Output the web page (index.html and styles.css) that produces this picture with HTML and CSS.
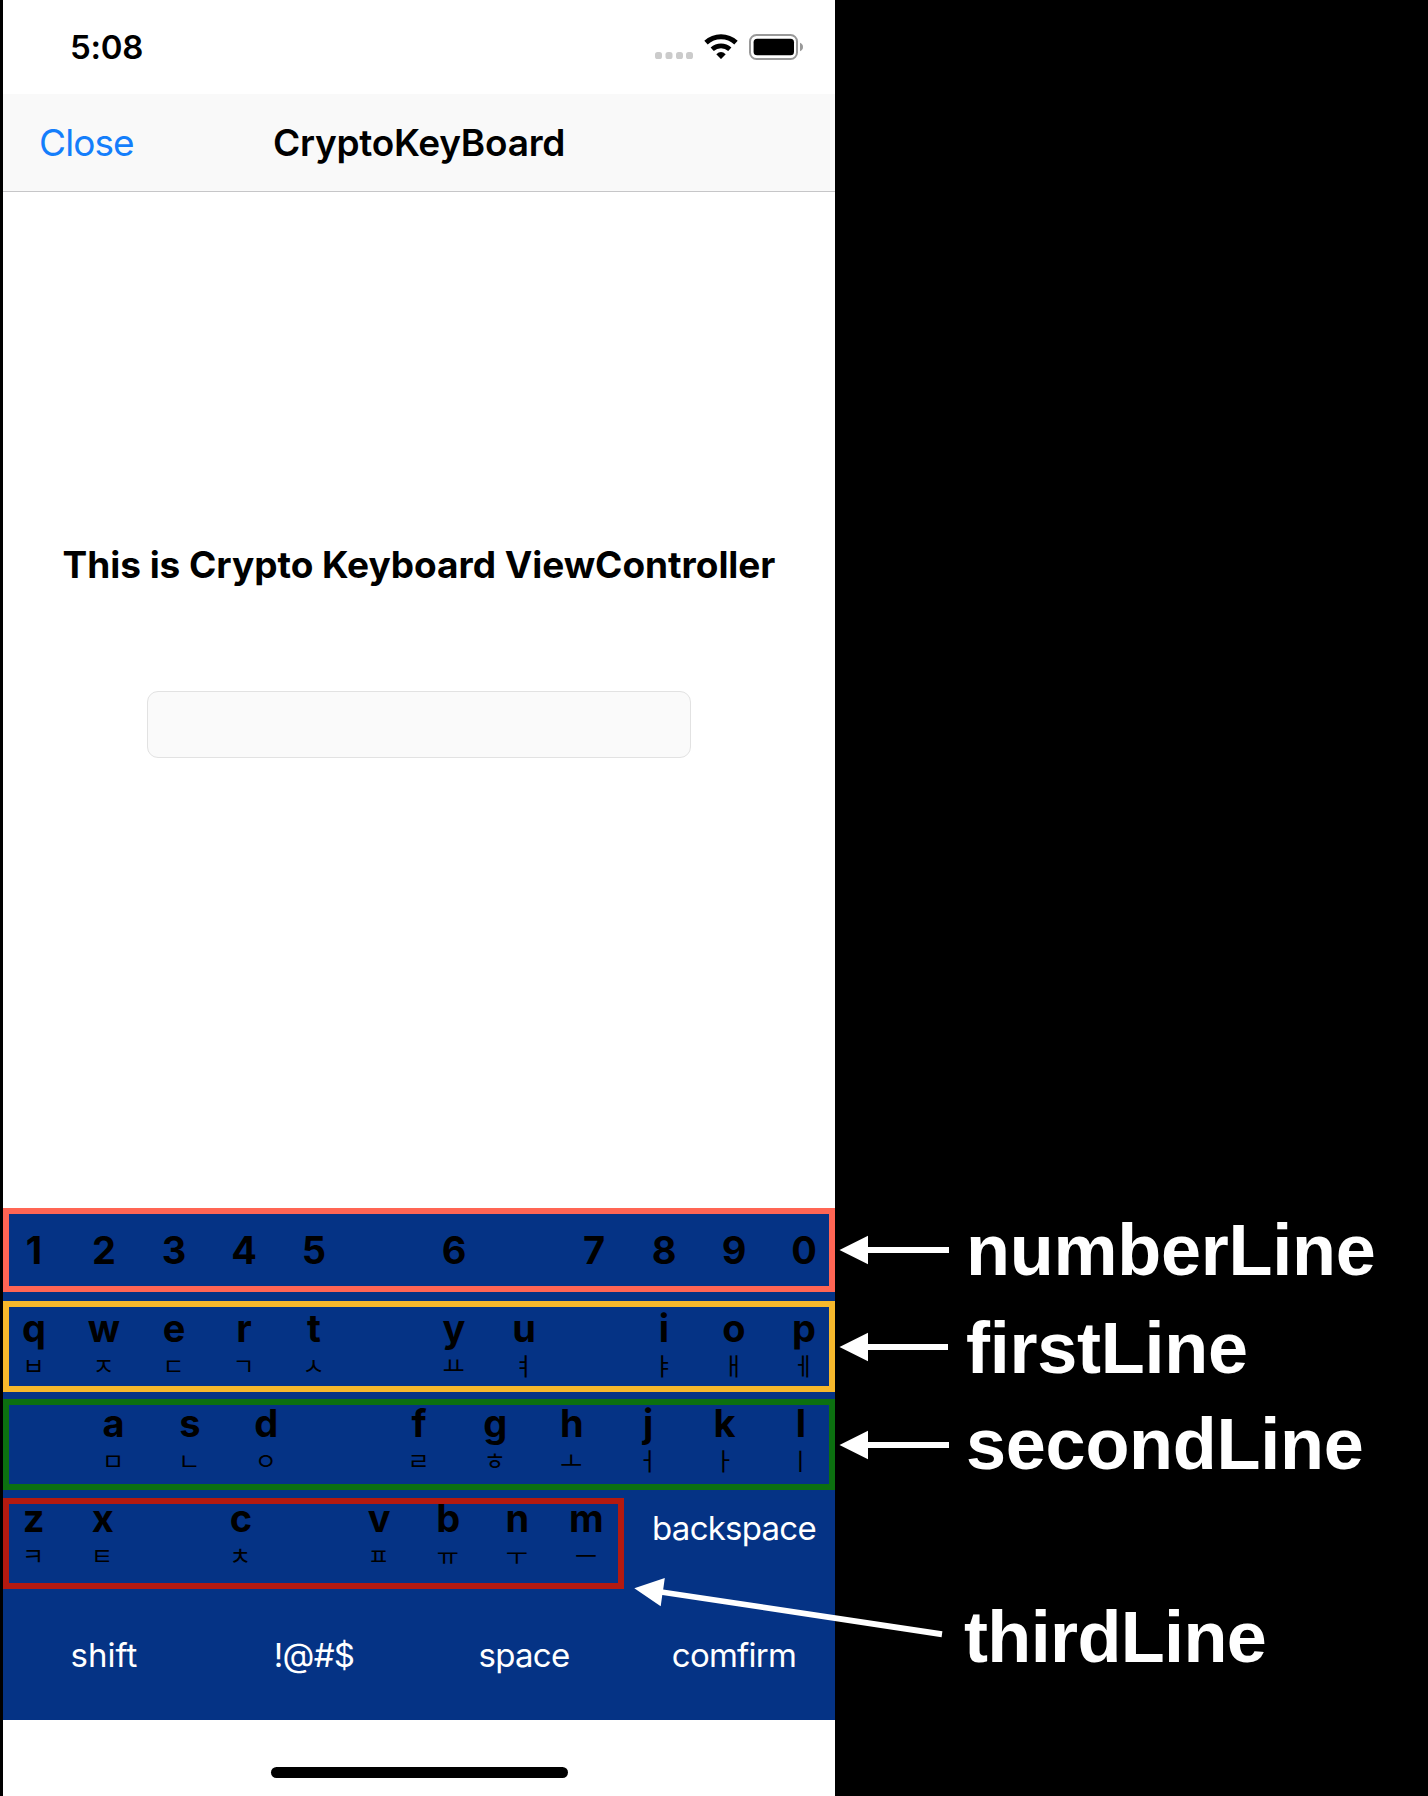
FILE: index.html
```html
<!DOCTYPE html>
<html lang="en">
<head>
<meta charset="utf-8">
<title>CryptoKeyBoard</title>
<link rel="stylesheet" href="styles.css">
</head>
<body>
<main class="stage">
  <section class="phone">
    <header class="status">
      <span class="clock">5:08</span>
      <svg class="status-icons" width="150" height="28" viewBox="654 33 150 28" aria-hidden="true">
        <g fill="#cbcbcb"><rect x="655" y="52" width="7" height="7" rx="2.6"/><rect x="665.500" y="52" width="7" height="7" rx="2.600"/><rect x="676" y="52" width="7" height="7" rx="2.600"/><rect x="686" y="52" width="7" height="7" rx="2.600"/></g>
        <path d="M706 42.600 A22 22 0 0 1 736 42.600" fill="none" stroke="#000" stroke-width="5"/>
        <path d="M712.200 49.200 A13.200 13.200 0 0 1 729.800 49.200" fill="none" stroke="#000" stroke-width="4.800"/>
        <path d="M716.300 54.300 Q721 49.700 725.700 54.300 L721.600 58.600 Q721 59.200 720.400 58.600 Z"/>
        <rect x="750" y="35" width="47" height="24" rx="6.500" fill="none" stroke="#999" stroke-width="2"/>
        <rect x="753.600" y="38.800" width="40.400" height="16.400" rx="3.500"/>
        <path d="M800 42.800 Q803 44 803 47 T800 51.200 Z" fill="#999"/>
      </svg>
    </header>
    <nav class="navbar">
      <span class="close">Close</span>
      <span class="title">CryptoKeyBoard</span>
    </nav>
    <div class="content">
      <h1 class="heading">This is Crypto Keyboard ViewController</h1>
      <div class="field"></div>
    </div>
    <div class="keyboard">
      <div class="row number"><b>1</b><b>2</b><b>3</b><b>4</b><b>5</b><i></i><b>6</b><i></i><b>7</b><b>8</b><b>9</b><b>0</b></div>
      <div class="row first">
        <div><b>q</b><span>ㅂ</span></div><div><b>w</b><span>ㅈ</span></div><div><b>e</b><span>ㄷ</span></div><div><b>r</b><span>ㄱ</span></div><div><b>t</b><span>ㅅ</span></div><i></i><div><b>y</b><span>ㅛ</span></div><div><b>u</b><span>ㅕ</span></div><i></i><div><b>i</b><span>ㅑ</span></div><div><b>o</b><span>ㅐ</span></div><div><b>p</b><span>ㅔ</span></div>
      </div>
      <div class="row second">
        <i></i><div><b>a</b><span>ㅁ</span></div><div><b>s</b><span>ㄴ</span></div><div><b>d</b><span>ㅇ</span></div><i></i><div><b>f</b><span>ㄹ</span></div><div><b>g</b><span>ㅎ</span></div><div><b>h</b><span>ㅗ</span></div><div><b>j</b><span>ㅓ</span></div><div><b>k</b><span>ㅏ</span></div><div><b>l</b><span>ㅣ</span></div>
      </div>
      <div class="third-wrap">
        <div class="row third">
          <div><b>z</b><span>ㅋ</span></div><div><b>x</b><span>ㅌ</span></div><i></i><div><b>c</b><span>ㅊ</span></div><i></i><div><b>v</b><span>ㅍ</span></div><div><b>b</b><span>ㅠ</span></div><div><b>n</b><span>ㅜ</span></div><div><b>m</b><span>ㅡ</span></div>
        </div>
        <span class="action backspace">backspace</span>
      </div>
      <div class="actions"><span class="action shift">shift</span><span class="action">!@#$</span><span class="action">space</span><span class="action">comfirm</span></div>
    </div>
    <footer class="home"><div class="indicator"></div></footer>
  </section>
  <aside class="labels">
    <p class="label l-number">numberLine</p>
    <p class="label l-first">firstLine</p>
    <p class="label l-second">secondLine</p>
    <p class="label l-third">thirdLine</p>
  </aside>
  <svg class="arrows" width="1428" height="1796" viewBox="0 0 1428 1796" aria-hidden="true">
    <g fill="#fff">
      <path d="M839.500 1250 L868 1235.700 V1247 H949 V1253 H868 V1264.300 Z"/>
      <path d="M839.500 1347 L868 1332.700 V1344 H948 V1350 H868 V1361.300 Z"/>
      <path d="M839.500 1445 L868 1430.700 V1442 H949 V1448 H868 V1459.300 Z"/>
      <path d="M634.300 1588.300 L664.800 1578 L663.200 1589.600 L942.400 1631.200 L941.600 1637.200 L662.300 1595 L660.700 1606.300 Z"/>
    </g>
  </svg>
</main>
</body>
</html>
```
FILE: styles.css
```css
* { box-sizing: border-box; }
body { margin: 0; background: #000; font-family: Inter, "Noto Sans CJK KR", sans-serif; color: #000; }
.stage { position: relative; display: flex; width: 1428px; height: 1796px; padding-left: 3px; overflow: hidden; }
.phone { display: flex; flex-direction: column; width: 832px; background: #fff; }
.status { display: flex; align-items: center; justify-content: space-between; height: 94px; padding: 0 31px 0 67px; }
.clock { font-size: 33px; font-weight: 600; line-height: 40px; letter-spacing: -0.3px; }
.status-icons { display: block; }
.navbar { display: grid; grid-template-columns: 1fr auto 1fr; align-items: center; height: 98px; padding: 0 36px; background: #f9f9f9; border-bottom: 1px solid #c6c6c8; font-size: 37px; line-height: 44px; }
.close { color: #147efb; letter-spacing: -0.9px; }
.title { font-weight: 600; letter-spacing: -0.25px; }
.content { display: flex; flex-direction: column; align-items: center; height: 1016px; padding-top: 350px; }
.heading { margin: 0; font-size: 37px; font-weight: 700; line-height: 46px; letter-spacing: -0.04px; white-space: nowrap; }
.field { width: 544px; height: 67px; margin-top: 103px; background: #fafafa; border: 1px solid #e2e2e2; border-radius: 11px; }
.keyboard { height: 512px; background: #053385; }
.row { display: grid; grid-template-columns: repeat(12, 1fr); column-gap: 8px; height: 91px; outline: 6px solid; outline-offset: -6px; }
.row div { display: flex; flex-direction: column; align-items: center; }
.row b { font-size: 38px; line-height: 40px; font-weight: 700; color: #000; text-align: center; }
.row span { font-family: "Noto Sans CJK KR", sans-serif; font-size: 24px; line-height: 34px; padding-right: 1px; color: #000; }
.number { height: 84px; align-items: center; outline-color: #ff6554; }
.first { margin-top: 9px; padding-top: 7px; outline-color: #f6b82c; }
.second { grid-template-columns: repeat(11, 1fr); margin-top: 7px; padding-top: 4px; outline-color: #0c7010; }
.third-wrap { display: flex; margin-top: 8px; }
.third { flex: none; grid-template-columns: repeat(9, 1fr); width: 621px; padding-right: 7px; outline-color: #b41a10; }
.action { color: #fff; font-size: 33px; line-height: 40px; text-align: center; letter-spacing: -0.75px; }
.backspace { flex: 1; margin-top: 10px; padding-left: 9px; }
.actions { display: grid; grid-template-columns: repeat(4, 1fr); column-gap: 8px; padding-top: 46px; }
.shift { letter-spacing: 0; }
.home { display: flex; justify-content: center; padding-top: 47px; }
.indicator { width: 297px; height: 11px; background: #000; border-radius: 6px; }
.labels { display: flex; flex-direction: column; align-items: flex-start; padding: 1210px 0 0 131px; }
.label { margin: 0; color: #fff; font-family: "Liberation Sans", Arial, sans-serif; font-size: 72px; font-weight: 700; line-height: 80px; letter-spacing: -0.25px; white-space: nowrap; }
.l-first { margin-top: 18px; }
.l-second { margin-top: 16px; }
.l-third { margin-top: 113px; margin-left: -2px; letter-spacing: -0.65px; }
.arrows { position: absolute; left: 0; top: 0; }
```
